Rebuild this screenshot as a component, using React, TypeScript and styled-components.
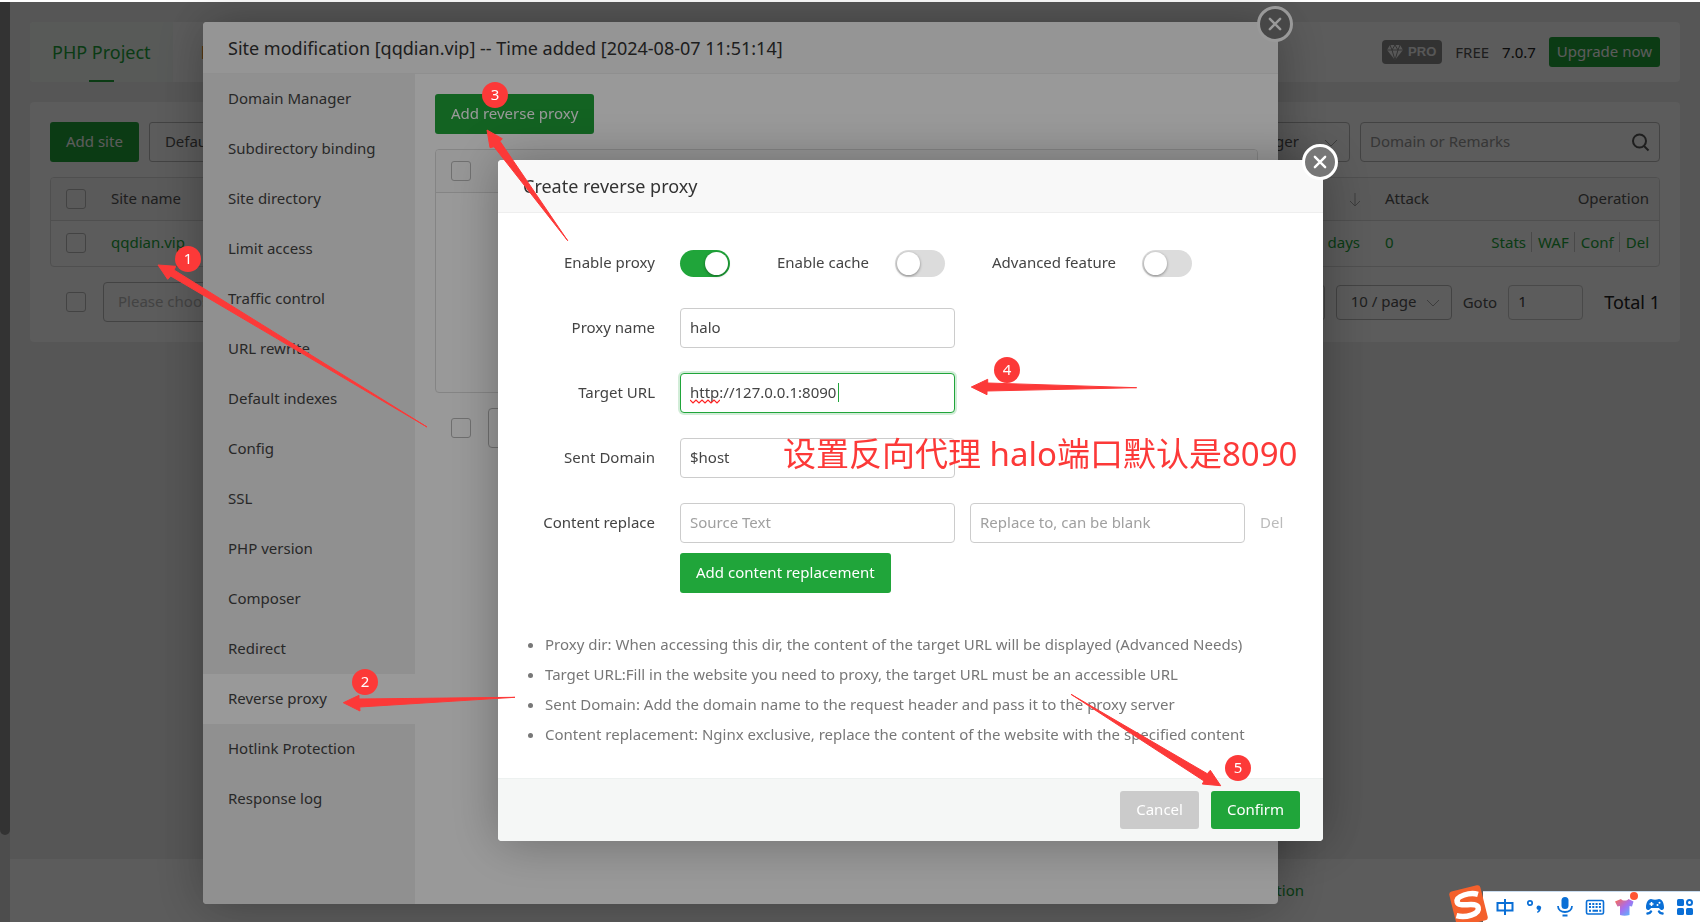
import React from "react";
import styled, { createGlobalStyle, css } from "styled-components";

const GREEN = "#20a53a";
const RED = "#fc3938";
const BLUE = "#0a6fd6";
const FONT = `"Noto Sans", "Noto Sans CJK SC", sans-serif`;

const GlobalStyle = createGlobalStyle`
  *, *::before, *::after { box-sizing: border-box; }
  body {
    margin: 0;
    background: #f0f0f0;
    color: #555;
    font: 15px/20px ${FONT};
    overflow: hidden;
  }
  button, input, select { font: inherit; color: inherit; margin: 0; }
  a { color: inherit; text-decoration: none; }
`;

/* ---------- shared controls ---------- */

const Button = styled.button<{ $tone?: "green" | "grey" | "plain"; $height?: number; $pad?: number }>`
  height: ${(p) => p.$height ?? 40}px;
  padding: 0 ${(p) => p.$pad ?? 15}px 2px;
  border: 1px solid transparent;
  border-radius: 3px;
  white-space: nowrap;
  line-height: 20px;
  color: #fff;
  background: ${GREEN};
  ${(p) => p.$tone === "grey" && css`background: #cbcbcb;`}
  ${(p) => p.$tone === "plain" && css`background: #fff; color: #555; border-color: #bbb;`}
`;

const Check = styled.input.attrs({ type: "checkbox" })`
  appearance: none;
  display: block;
  flex: none;
  width: 20px;
  height: 20px;
  border: 1px solid #bbb;
  border-radius: 3px;
  background: transparent;
`;

const TextInput = styled.input<{ $width?: number; $height?: number; $focus?: boolean }>`
  display: block;
  width: ${(p) => p.$width ?? 275}px;
  height: ${(p) => p.$height ?? 40}px;
  padding: 0 9px 2px;
  border: 1px solid ${(p) => (p.$focus ? GREEN : "#ccc")};
  border-radius: 4px;
  outline: none;
  background: #fff;
  color: #444;
  box-shadow: ${(p) => (p.$focus ? "0 0 0 2px rgba(32, 165, 58, 0.2)" : "none")};
  &::placeholder { color: #a0a0a0; opacity: 1; }
`;

const SelectWrap = styled.span<{ $width: number; $height?: number }>`
  position: relative;
  display: block;
  width: ${(p) => p.$width}px;
  height: ${(p) => p.$height ?? 40}px;
  svg {
    position: absolute;
    right: 12px;
    top: 50%;
    margin-top: -3px;
  }
`;

const SelectBox = styled.select<{ $muted?: boolean; $right?: boolean }>`
  appearance: none;
  width: 100%;
  height: 100%;
  padding: 0 ${(p) => (p.$right ? 50 : 30)}px 2px 14px;
  border: 1px solid #bbb;
  border-radius: 4px;
  background: transparent;
  color: ${(p) => (p.$muted ? "#bbb" : "#555")};
  text-align-last: ${(p) => (p.$right ? "right" : "left")};
`;

const Chevron = () => (
  <svg width="14" height="8" viewBox="0 0 14 8" fill="none" stroke="#aaa" strokeWidth="1">
    <path d="M1 1l6 6 6-6" />
  </svg>
);

type SelectProps = { label: string; value: string; width: number; height?: number; muted?: boolean; right?: boolean };
const Select = ({ label, value, width, height, muted, right }: SelectProps) => (
  <SelectWrap $width={width} $height={height}>
    <SelectBox aria-label={label} $muted={muted} $right={right}>
      <option>{value}</option>
    </SelectBox>
    <Chevron />
  </SelectWrap>
);

/* ---------- page below the dialogs ---------- */

const Page = styled.div`
  display: flex;
  min-height: 100vh;
  border-top: 2px solid #fff;
`;

const Rail = styled.div`
  flex: none;
  width: 10px;
  padding-bottom: 87px;
  background: #d6d6d6;
  display: flex;
  &::before {
    content: "";
    flex: 1;
    background: #909090;
    border-radius: 0 0 5px 5px;
  }
`;

const Content = styled.div`
  flex: 1;
  min-width: 0;
  display: flex;
  flex-direction: column;
`;

const Main = styled.main`
  flex: 1;
  padding: 20px 20px 0;
  display: flex;
  flex-direction: column;
  gap: 20px;
`;

const TopBar = styled.header`
  display: flex;
  align-items: center;
  height: 60px;
  padding-right: 20px;
  border-radius: 4px;
  background: #fff;
  overflow: hidden;
`;

const Tab = styled.a<{ $active?: boolean }>`
  position: relative;
  height: 60px;
  padding: 0 ${(p) => (p.$active ? 22 : 28)}px;
  line-height: 60px;
  font-size: 18px;
  color: ${(p) => (p.$active ? GREEN : "#e8852a")};
  background: ${(p) => (p.$active ? "#f5faf6" : "#fff")};
  &::after {
    content: "";
    display: ${(p) => (p.$active ? "block" : "none")};
    position: absolute;
    left: 50%;
    bottom: 0;
    width: 25px;
    height: 2px;
    margin-left: -12px;
    background: ${GREEN};
  }
`;

const Account = styled.div`
  display: flex;
  align-items: center;
  gap: 13px;
  margin-left: auto;
`;

const Pro = styled.span`
  display: flex;
  align-items: center;
  gap: 5px;
  height: 24px;
  padding: 0 6px 0 5px;
  border-radius: 4px;
  background: #8c8c8c;
  color: #f4f4f4;
  font: bold 13px/24px "Liberation Sans", sans-serif;
`;

const Version = styled.span`
  color: #222;
`;

const Card = styled.section`
  padding: 20px;
  border-radius: 4px;
  background: #fff;
`;

const Row = styled.div<{ $gap?: number }>`
  display: flex;
  align-items: center;
  gap: ${(p) => p.$gap ?? 10}px;
`;

const Spacer = styled.span`
  flex: 1;
`;

const SearchField = styled.label`
  position: relative;
  display: block;
  input { border-color: #bbb; background: transparent; }
  input::placeholder { color: #999; }
  svg { position: absolute; right: 10px; top: 11px; }
`;

const TableFrame = styled.div<{ $height?: number }>`
  margin: 15px 0;
  border: 1px solid #ddd;
  border-radius: 4px;
  overflow: hidden;
  height: ${(p) => (p.$height ? `${p.$height}px` : "auto")};
`;

const Table = styled.table`
  width: 100%;
  border-collapse: collapse;
  table-layout: fixed;
  th, td { padding: 0 10px 2px; text-align: left; font-weight: normal; white-space: nowrap; }
  th { height: 42px; background: #fafafa; border-bottom: 1px solid #ddd; }
  td { height: 46px; color: ${GREEN}; }
  th:first-child, td:first-child { width: 50px; padding: 0 15px; }
  th:last-child, td:last-child { text-align: right; }
`;

const DaysCell = styled.td`
  && { text-align: right; padding-right: 15px; }
`;

const SortCell = styled.th`
  && { text-align: right; padding-right: 14px; }
  svg { display: inline-block; vertical-align: middle; }
`;

const Actions = styled.span`
  display: flex;
  justify-content: flex-end;
  a + a { margin-left: 5px; padding-left: 6px; border-left: 1px solid #ccc; }
`;

const PageRow = styled(Row)`
  padding-left: 16px;
  height: 40px;
`;

const PageSizes = styled(Row)`
  margin-left: auto;
`;

const Total = styled.span`
  margin-left: 10px;
  font-size: 18px;
  color: #222;
`;

const Footer = styled.footer`
  display: flex;
  justify-content: flex-end;
  height: 63px;
  padding-right: 396px;
  background: #fff;
  color: ${GREEN};
  line-height: 62px;
`;

/* ---------- dialogs ---------- */

const Shade = styled.div`
  position: fixed;
  inset: 2px 0 0;
  background: rgba(0, 0, 0, 0.4);
`;

const Dialog = styled.section`
  position: absolute;
  display: flex;
  flex-direction: column;
  border-radius: 4px;
  background: #fff;
  box-shadow: 1px 1px 50px rgba(0, 0, 0, 0.3);
`;

const SiteDialog = styled(Dialog)`
  left: 203px;
  right: 422px;
  top: 20px;
  bottom: 18px;
`;

const ProxyDialog = styled(Dialog)`
  left: 498px;
  width: 825px;
  top: 158px;
`;

const DialogTitle = styled.h2<{ $height: number }>`
  margin: 0;
  height: ${(p) => p.$height}px;
  padding: 0 25px;
  border-bottom: 1px solid #eee;
  border-radius: 4px 4px 0 0;
  background: #f8f8f8;
  color: #333;
  font-size: 18px;
  font-weight: normal;
  line-height: 52px;
`;

const CloseButton = styled.button`
  position: absolute;
  top: -16px;
  right: -15px;
  width: 36px;
  height: 36px;
  padding: 0;
  border: 3px solid #fff;
  border-radius: 50%;
  background: #777;
  svg { display: block; margin: 8px; }
`;

const Close = ({ label }: { label: string }) => (
  <CloseButton aria-label={label}>
    <svg width="14" height="14" viewBox="0 0 15 15" stroke="#fff" strokeWidth="2.6" strokeLinecap="round">
      <path d="M2 2l11 11M13 2L2 13" />
    </svg>
  </CloseButton>
);

const SiteBody = styled.div`
  flex: 1;
  display: flex;
  min-height: 0;
`;

const Menu = styled.nav`
  flex: none;
  width: 212px;
  background: #f0f0f0;
  border-radius: 0 0 0 4px;
`;

const MenuItem = styled.a<{ $active?: boolean }>`
  display: block;
  height: 50px;
  padding-left: 25px;
  line-height: 48px;
  color: #444;
  background: ${(p) => (p.$active ? "#fff" : "transparent")};
`;

const SitePane = styled.div`
  flex: 1;
  padding: 20px;
`;

const FormBody = styled.div`
  display: flex;
  flex-direction: column;
  gap: 25px;
  padding: 30px 0 0;
  color: #444;
`;

const Field = styled.div`
  display: flex;
  align-items: center;
  height: 40px;
`;

const FieldLabel = styled.label`
  width: 182px;
  padding: 0 25px 2px 0;
  flex: none;
  text-align: right;
`;

const InlineLabel = styled.label`
  margin: 0 26px 2px 47px;
  white-space: nowrap;
`;

const Switch = styled.input.attrs({ type: "checkbox", role: "switch" })`
  appearance: none;
  flex: none;
  display: flex;
  width: 50px;
  height: 27px;
  padding: 2px;
  border-radius: 14px;
  background: #dcdcdc;
  &::before {
    content: "";
    width: 23px;
    height: 23px;
    border-radius: 50%;
    background: #fff;
    box-shadow: 0 1px 3px rgba(0, 0, 0, 0.4);
  }
  &:checked { background: ${GREEN}; justify-content: flex-end; }
`;

const FieldBox = styled.span`
  position: relative;
  display: block;
`;

const Squiggle = styled.svg`
  position: absolute;
  left: 10px;
  top: 26px;
`;

const Caret = styled.span`
  position: absolute;
  left: 158px;
  top: 10px;
  width: 1px;
  height: 19px;
  background: ${GREEN};
`;

const ReplaceLink = styled.a`
  margin: 0 0 2px 15px;
  color: #bbb;
`;

const ReplaceBlock = styled.div`
  display: flex;
  flex-direction: column;
  align-items: flex-start;
  gap: 10px;
  > button { margin-left: 182px; }
`;

const Notes = styled.ul`
  margin: 36px 0 29px;
  padding: 0 0 0 47px;
  color: #777;
  line-height: 30px;
  li { white-space: nowrap; }
`;

const DialogFooter = styled.footer`
  display: flex;
  justify-content: flex-end;
  gap: 12px;
  padding: 12px 23px;
  border-top: 1px solid #edf1f0;
  border-radius: 0 0 4px 4px;
  background: #f5f7f6;
`;

/* ---------- annotations ---------- */

const Marks = styled.div`
  position: fixed;
  inset: 0;
  pointer-events: none;
  > svg { position: absolute; inset: 0; width: 100%; height: 100%; }
`;

const Badge = styled.span<{ $x: number; $y: number }>`
  position: absolute;
  left: ${(p) => p.$x - 13}px;
  top: ${(p) => p.$y - 13}px;
  width: 26px;
  height: 26px;
  border-radius: 50%;
  background: ${RED};
  color: #fff;
  font-size: 15px;
  line-height: 24px;
  text-align: center;
`;

const Caption = styled.p`
  position: absolute;
  left: 783px;
  top: 430px;
  margin: 0;
  color: ${RED};
  font-size: 33px;
  line-height: 48px;
  white-space: nowrap;
`;

const arrows = [
  "158,265 175.7,266.3 174,270 427,427 170.7,276 167.7,279.3",
  "343.3,702.7 359,695.3 359,699 515,697.3 359.7,707 360,711",
  "487,130 502.3,138.7 500,141.3 567.7,240.7 494,146.7 490,147.7",
  "971.3,387 987.7,379.3 987.7,383 1136.7,387.7 987,391 987,394.7",
  "1220.7,785.7 1210.3,770.3 1207.3,773.7 1071,694.3 1204,781 1202.3,784",
];

const badges: [number, number][] = [
  [188, 259],
  [365, 682],
  [495, 95],
  [1007, 370],
  [1238, 768],
];

/* ---------- input method bar ---------- */

const ImeBar = styled.div`
  position: fixed;
  right: 0;
  bottom: 0;
  display: flex;
  align-items: center;
  gap: 10px;
  width: 217px;
  height: 31px;
  padding-left: 12px;
  border-top: 1px solid #c9dcf0;
  background: #fff;
  color: ${BLUE};
`;

const ImeLogo = styled.svg`
  position: absolute;
  left: -36px;
  bottom: 0;
`;

const ImeIcon = styled.svg`
  flex: none;
  width: 20px;
  height: 20px;
  overflow: visible;
`;

const Ime = () => (
  <ImeBar>
    <ImeLogo width="42" height="38" viewBox="0 0 42 38">
      <g transform="rotate(-14 21 20)">
        <rect x="5" y="4" width="32" height="36" rx="3" fill="#f4602c" />
        <path
          d="M33 13C26 9 11 9 11 15.500C11 22 30 19 30 26C30 33 15 33 7 28.500"
          fill="none"
          stroke="#fff"
          strokeWidth="5.500"
        />
      </g>
    </ImeLogo>
    <ImeIcon viewBox="0 0 20 20" fill="none" stroke={BLUE} strokeWidth="2">
      <path d="M2.500 6h15v7.500h-15zM10 2v16" />
    </ImeIcon>
    <ImeIcon viewBox="0 0 20 20">
      <circle cx="5" cy="6" r="2.200" fill="none" stroke={BLUE} strokeWidth="1.700" />
      <path d="M11.500 10.500a2.300 2.300 0 1 1 4.300 1.500c-.3 2-1.500 3.200-3.300 4l-.5-1.200c1-.5 1.500-1.200 1.500-2-1.100 0-2-.9-2-2.300z" fill={BLUE} />
    </ImeIcon>
    <ImeIcon viewBox="0 0 20 20">
      <rect x="6.500" y="0" width="7" height="12" rx="3.500" fill={BLUE} />
      <path d="M3 9c0 8 14 8 14 0M7.500 18.500h5" fill="none" stroke={BLUE} strokeWidth="1.800" />
    </ImeIcon>
    <ImeIcon viewBox="0 0 20 20">
      <rect x="1.500" y="3.500" width="17" height="13.500" rx="1.500" fill="none" stroke={BLUE} strokeWidth="1.600" />
      <path d="M4 7h12M4 10h12" stroke={BLUE} strokeWidth="2" strokeDasharray="2 1.300" />
      <path d="M4 13.700h2M7.500 13.700h5.500M14.300 13.700h2" stroke={BLUE} strokeWidth="2" />
    </ImeIcon>
    <ImeIcon viewBox="0 0 20 20">
      <defs>
        <linearGradient id="shirt" x1="0" y1="0" x2="1" y2="1">
          <stop offset="0" stopColor="#ff6a4a" />
          <stop offset=".5" stopColor="#a66ff0" />
          <stop offset="1" stopColor="#45c8ff" />
        </linearGradient>
      </defs>
      <path d="M6 2c1.500 2 6 2 7.500 0l5 2.500-1.500 5-2.500-.5v9q-5 1.500-9.500 0v-9l-2.500.5-2.500-5z" fill="url(#shirt)" />
      <circle cx="19" cy="-1" r="4" fill="#ff5533" />
    </ImeIcon>
    <ImeIcon viewBox="0 0 20 20">
      <path d="M6 2q4 1.500 8 0c3 0 5 4 5 8.500 0 3-3 3.500-5 .5h-8c-2 3-5 2.500-5-.5C1 6 3 2 6 2z" fill={BLUE} />
      <path d="M4.500 7h4M6.500 5v4" stroke="#fff" strokeWidth="1.500" />
      <circle cx="12.500" cy="8" r="1" fill="#fff" />
      <circle cx="14.500" cy="5.800" r="1" fill="#fff" />
      <path d="M2.500 16.500q2.500 0 3.500-2M17.500 16.500q-2.500 0-3.500-2" fill="none" stroke={BLUE} strokeWidth="2.500" strokeLinecap="round" />
    </ImeIcon>
    <ImeIcon viewBox="0 0 20 20" fill={BLUE}>
      <rect x="2" y="2" width="7" height="7" rx="1.500" />
      <rect x="12" y="3" width="5" height="5" rx="2.500" fill="none" stroke={BLUE} strokeWidth="2" />
      <rect x="2" y="11" width="7" height="7" rx="1.500" />
      <rect x="11" y="11" width="7" height="7" rx="1.500" />
    </ImeIcon>
  </ImeBar>
);

const menu = [
  "Domain Manager",
  "Subdirectory binding",
  "Site directory",
  "Limit access",
  "Traffic control",
  "URL rewrite",
  "Default indexes",
  "Config",
  "SSL",
  "PHP version",
  "Composer",
  "Redirect",
  "Reverse proxy",
  "Hotlink Protection",
  "Response log",
];

const notes = [
  "Proxy dir: When accessing this dir, the content of the target URL will be displayed (Advanced Needs)",
  "Target URL:Fill in the website you need to proxy, the target URL must be an accessible URL",
  "Sent Domain: Add the domain name to the request header and pass it to the proxy server",
  "Content replacement: Nginx exclusive, replace the content of the website with the specified content",
];

export default function App() {
  return (
    <>
      <GlobalStyle />
      <Page>
        <Rail />
        <Content>
          <Main>
            <TopBar>
              <Tab href="#php" $active>PHP Project</Tab>
              <Tab href="#node">Node</Tab>
              <Account>
                <Pro>
                  <svg width="16" height="15" viewBox="0 0 16 15">
                    <path d="M3 0h10l3 5-8 10L0 5z" fill="#f4f4f4" />
                    <path d="M0 5h16M5 5l3 10 3-10M3 0l2 5 3-5 3 5 2-5" fill="none" stroke="#8c8c8c" />
                  </svg>
                  PRO
                </Pro>
                <span>FREE</span>
                <Version>7.0.7</Version>
                <Button $height={30} $pad={7}>Upgrade now</Button>
              </Account>
            </TopBar>
            <Card>
              <Row>
                <Button>Add site</Button>
                <Button $tone="plain">Default</Button>
                <Spacer />
                <Select label="Category" value="Manager" width={190} right />
                <SearchField>
                  <TextInput $width={300} placeholder="Domain or Remarks" aria-label="Search sites" />
                  <svg width="19" height="19" viewBox="0 0 19 19" fill="none" stroke="#555" strokeWidth="2">
                    <circle cx="8.500" cy="8" r="6.500" />
                    <path d="M13 13l4.500 4.500" />
                  </svg>
                </SearchField>
              </Row>
              <TableFrame>
                <Table>
                  <colgroup>
                    <col width="50" />
                    <col />
                    <col width="160" />
                    <col width="100" />
                    <col width="184" />
                  </colgroup>
                  <thead>
                    <tr>
                      <th><Check aria-label="Select all sites" /></th>
                      <th>Site name</th>
                      <SortCell>
                        <svg width="12" height="14" viewBox="0 0 12 14" fill="none" stroke="#aaa">
                          <path d="M6 0v13M1 8l5 5 5-5" />
                        </svg>
                      </SortCell>
                      <th>Attack</th>
                      <th>Operation</th>
                    </tr>
                  </thead>
                  <tbody>
                    <tr>
                      <td><Check aria-label="Select qqdian.vip" /></td>
                      <td><a href="#site">qqdian.vip</a></td>
                      <DaysCell>days</DaysCell>
                      <td>0</td>
                      <td>
                        <Actions>
                          <a href="#stats">Stats</a>
                          <a href="#waf">WAF</a>
                          <a href="#conf">Conf</a>
                          <a href="#del">Del</a>
                        </Actions>
                      </td>
                    </tr>
                  </tbody>
                </Table>
              </TableFrame>
              <PageRow $gap={17}>
                <Check aria-label="Select all" />
                <Select label="Batch action" value="Please choose" width={200} muted />
                <PageSizes $gap={11}>
                  <Button $tone="plain" $height={35}>1</Button>
                  <Select label="Page size" value="10 / page" width={116} height={35} />
                  <label htmlFor="goto">Goto</label>
                  <TextInput id="goto" $width={75} $height={35} defaultValue="1" />
                  <Total>Total 1</Total>
                </PageSizes>
              </PageRow>
            </Card>
          </Main>
          <Footer><a href="#docs">Documentation</a></Footer>
        </Content>
      </Page>

      <Shade>
        <SiteDialog role="dialog" aria-label="Site modification">
          <DialogTitle $height={52}>Site modification [qqdian.vip] -- Time added [2024-08-07 11:51:14]</DialogTitle>
          <Close label="Close site modification" />
          <SiteBody>
            <Menu>
              {menu.map((m) => (
                <MenuItem key={m} href="#menu" $active={m === "Reverse proxy"}>{m}</MenuItem>
              ))}
            </Menu>
            <SitePane>
              <Button>Add reverse proxy</Button>
              <TableFrame $height={244}>
                <Table>
                  <thead>
                    <tr>
                      <th><Check aria-label="Select all proxies" /></th>
                      <th />
                    </tr>
                  </thead>
                </Table>
              </TableFrame>
              <PageRow $gap={17}>
                <Check aria-label="Select every proxy" />
                <Select label="Proxy batch action" value="Please choose" width={200} muted />
              </PageRow>
            </SitePane>
          </SiteBody>
        </SiteDialog>
      </Shade>

      <Shade>
        <ProxyDialog role="dialog" aria-label="Create reverse proxy">
          <DialogTitle $height={53}>Create reverse proxy</DialogTitle>
          <Close label="Close create reverse proxy" />
          <FormBody>
            <Field>
              <FieldLabel htmlFor="enable">Enable proxy</FieldLabel>
              <Switch id="enable" defaultChecked />
              <InlineLabel htmlFor="cache">Enable cache</InlineLabel>
              <Switch id="cache" />
              <InlineLabel htmlFor="advanced">Advanced feature</InlineLabel>
              <Switch id="advanced" />
            </Field>
            <Field>
              <FieldLabel htmlFor="name">Proxy name</FieldLabel>
              <TextInput id="name" defaultValue="halo" />
            </Field>
            <Field>
              <FieldLabel htmlFor="url">Target URL</FieldLabel>
              <FieldBox>
                <TextInput id="url" $focus spellCheck={false} defaultValue="http://127.0.0.1:8090" />
                <Squiggle width="30" height="5" viewBox="0 0 30 5" fill="none" stroke="#f22" strokeWidth="1.200">
                  <path d="M0 1l3 3 3-3 3 3 3-3 3 3 3-3 3 3 3-3 3 3 3-3" />
                </Squiggle>
                <Caret />
              </FieldBox>
            </Field>
            <Field>
              <FieldLabel htmlFor="domain">Sent Domain</FieldLabel>
              <TextInput id="domain" defaultValue="$host" />
            </Field>
            <ReplaceBlock>
              <Field>
                <FieldLabel htmlFor="source">Content replace</FieldLabel>
                <Row $gap={15}>
                  <TextInput id="source" placeholder="Source Text" />
                  <TextInput aria-label="Replace to" placeholder="Replace to, can be blank" />
                </Row>
                <ReplaceLink href="#del-row">Del</ReplaceLink>
              </Field>
              <Button>Add content replacement</Button>
            </ReplaceBlock>
          </FormBody>
          <Notes>
            {notes.map((n) => (
              <li key={n}>{n}</li>
            ))}
          </Notes>
          <DialogFooter>
            <Button $tone="grey" $height={38}>Cancel</Button>
            <Button $height={38}>Confirm</Button>
          </DialogFooter>
        </ProxyDialog>
      </Shade>

      <Marks>
        <svg fill={RED}>
          {arrows.map((a) => (
            <polygon key={a} points={a} stroke={RED} strokeWidth="1" strokeLinejoin="bevel" />
          ))}
        </svg>
        {badges.map(([x, y], i) => (
          <Badge key={i} $x={x} $y={y}>{i + 1}</Badge>
        ))}
        <Caption>设置反向代理 halo端口默认是8090</Caption>
      </Marks>
      <Ime />
    </>
  );
}
